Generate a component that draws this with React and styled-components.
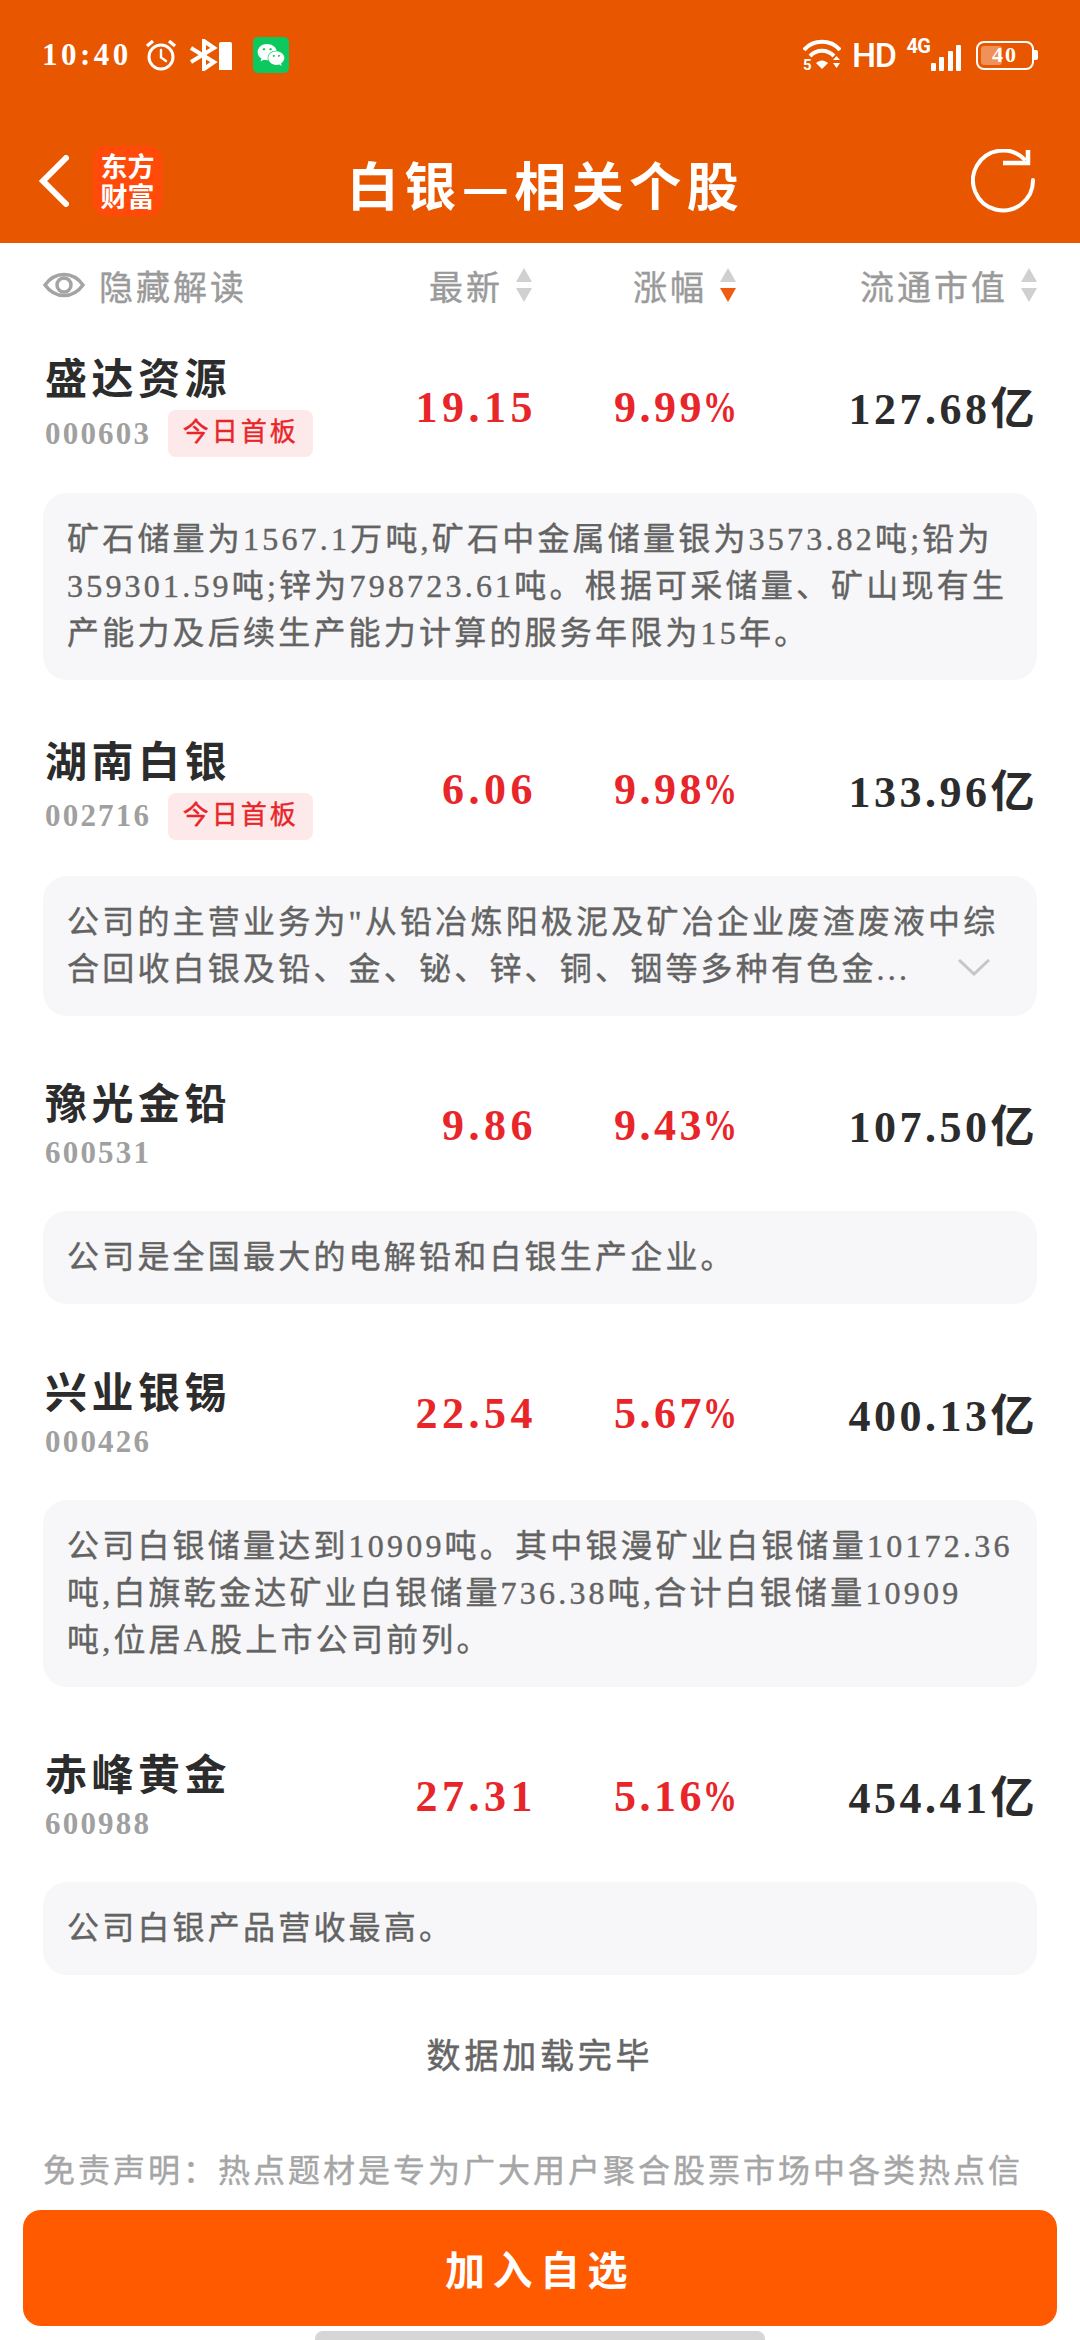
import React from "react";
import styled, { createGlobalStyle } from "styled-components";
import { FaWeixin } from "react-icons/fa";

const stocks = [
  {
    name: "盛达资源",
    code: "000603",
    tag: "今日首板",
    price: "19.15",
    pct: "9.99",
    cap: "127.68亿",
    lines: [
      "矿石储量为1567.1万吨,矿石中金属储量银为3573.82吨;铅为",
      "359301.59吨;锌为798723.61吨。根据可采储量、矿山现有生",
      "产能力及后续生产能力计算的服务年限为15年。",
    ],
  },
  {
    name: "湖南白银",
    code: "002716",
    tag: "今日首板",
    price: "6.06",
    pct: "9.98",
    cap: "133.96亿",
    collapsed: true,
    lines: [
      "公司的主营业务为\"从铅冶炼阳极泥及矿冶企业废渣废液中综",
      "合回收白银及铅、金、铋、锌、铜、铟等多种有色金...",
    ],
  },
  {
    name: "豫光金铅",
    code: "600531",
    price: "9.86",
    pct: "9.43",
    cap: "107.50亿",
    lines: ["公司是全国最大的电解铅和白银生产企业。"],
  },
  {
    name: "兴业银锡",
    code: "000426",
    price: "22.54",
    pct: "5.67",
    cap: "400.13亿",
    lines: [
      "公司白银储量达到10909吨。其中银漫矿业白银储量10172.36",
      "吨,白旗乾金达矿业白银储量736.38吨,合计白银储量10909",
      "吨,位居A股上市公司前列。",
    ],
  },
  {
    name: "赤峰黄金",
    code: "600988",
    price: "27.31",
    pct: "5.16",
    cap: "454.41亿",
    lines: ["公司白银产品营收最高。"],
  },
];

function AlarmIcon() {
  return (
    <svg width="32" height="32" viewBox="0 0 32 32" fill="none" stroke="#fff">
      <circle cx="16" cy="18" r="12" strokeWidth="3" />
      <path d="M16 11v7.5l5 3.5" strokeWidth="2.4" strokeLinecap="round" />
      <path d="M2 7l6-5M30 7l-6-5" strokeWidth="3.4" />
    </svg>
  );
}

function BluetoothIcon() {
  return (
    <svg width="30" height="32" viewBox="0 0 30 32" fill="none" stroke="#fff" strokeWidth="4">
      <path d="M2 9l23 14-10 7V2l10 7L2 23" />
    </svg>
  );
}

function WifiIcon() {
  return (
    <svg width="38" height="32" viewBox="0 0 38 32" fill="#fff">
      <path d="M1 11C10 0 28 0 37 11" fill="none" stroke="#fff" strokeWidth="4" />
      <path d="M7 17c7-7 17-7 24 0" fill="none" stroke="#fff" strokeWidth="4" />
      <path d="M13 24c4-3.500 8-3.500 12 0l-6 6z" />
      <path d="M30 21l3.500-4 3.500 4zM30 24h7l-3.500 5z" />
      <text x="0" y="31" fontSize="15" fontWeight="700" fontFamily="Roboto, sans-serif">5</text>
    </svg>
  );
}

function BackIcon() {
  return (
    <svg width="30" height="52" viewBox="0 0 30 52" fill="none" stroke="#fff" strokeWidth="6" strokeLinecap="round">
      <path d="M27 3L4 26l23 23" />
    </svg>
  );
}

function RefreshIcon() {
  return (
    <svg width="64" height="64" viewBox="0 0 64 64" fill="none" stroke="#fff" strokeWidth="4">
      <path d="M62 31A30 30 0 1 1 53 10" strokeLinecap="round" />
      <path d="M57 1v13H32" strokeWidth="4.500" />
    </svg>
  );
}

function EyeIcon() {
  return (
    <svg width="42" height="32" viewBox="0 0 42 32" fill="none" stroke="#a4a4a4" strokeWidth="3.500">
      <path d="M2 16C12 2 30 2 40 16 30 30 12 30 2 16z" />
      <circle cx="21" cy="16" r="7" />
    </svg>
  );
}

function ChevronIcon() {
  return (
    <svg width="32" height="17" viewBox="0 0 32 17" fill="none" stroke="#c6c6c6" strokeWidth="3">
      <path d="M1 1l15 14L31 1" />
    </svg>
  );
}

function SortHead({ label, active }) {
  return (
    <HeadCell>
      {label}
      <SortArrows>
        <ArrowUp />
        <ArrowDown $active={active} />
      </SortArrows>
    </HeadCell>
  );
}

function StockItem({ stock }) {
  return (
    <Item>
      <ItemHead>
        <NameCell>
          <Name>{stock.name}</Name>
          <Meta $tagged={!!stock.tag}>
            <Code>{stock.code}</Code>
            {stock.tag && <Tag>{stock.tag}</Tag>}
          </Meta>
        </NameCell>
        <Price>{stock.price}</Price>
        <Quote>
          {stock.pct}
          <PercentSign>%</PercentSign>
        </Quote>
        <MarketCap>{stock.cap}</MarketCap>
      </ItemHead>
      <Note>
        {stock.lines.map((line) => (
          <NoteLine key={line}>{line}</NoteLine>
        ))}
        {stock.collapsed && (
          <Expand>
            <ChevronIcon />
          </Expand>
        )}
      </Note>
    </Item>
  );
}

export default function App() {
  return (
    <Page>
      <GlobalStyle />
      <TopBar>
        <StatusBar>
          <StatusGroup>
            <Clock>10:40</Clock>
            <AlarmIcon />
            <BluetoothGroup>
              <BluetoothIcon />
              <MiniBattery />
            </BluetoothGroup>
            <WechatBadge>
              <FaWeixin size={28} color="#fff" />
            </WechatBadge>
          </StatusGroup>
          <StatusGroup>
            <WifiIcon />
            <HdLabel>HD</HdLabel>
            <SignalGroup>
              <NetLabel>4G</NetLabel>
              <Bars>
                <Bar $h={8} />
                <Bar $h={14} />
                <Bar $h={20} />
                <Bar $h={26} />
              </Bars>
            </SignalGroup>
            <Battery>
              <BatteryLevel />
              <BatteryText>40</BatteryText>
            </Battery>
          </StatusGroup>
        </StatusBar>
        <NavBar>
          <NavLeft>
            <BackIcon />
            <LogoBadge>
              东方
              <br />
              财富
            </LogoBadge>
          </NavLeft>
          <Title>白银—相关个股</Title>
          <NavRight>
            <RefreshIcon />
          </NavRight>
        </NavBar>
      </TopBar>

      <TableHead>
        <HideToggle>
          <EyeIcon />
          隐藏解读
        </HideToggle>
        <SortHead label="最新" />
        <SortHead label="涨幅" active />
        <SortHead label="流通市值" />
      </TableHead>

      {stocks.map((stock) => (
        <StockItem key={stock.code} stock={stock} />
      ))}

      <LoadedHint>数据加载完毕</LoadedHint>
      <Disclaimer>免责声明：热点题材是专为广大用户聚合股票市场中各类热点信</Disclaimer>

      <Dock>
        <AddButton>加入自选</AddButton>
        <HomeBar />
      </Dock>
    </Page>
  );
}

const GlobalStyle = createGlobalStyle`
  html, body {
    margin: 0;
    padding: 0;
    height: 100%;
    overflow: hidden;
    background: #fff;
  }
  * {
    box-sizing: border-box;
  }
`;

const Page = styled.div`
  width: 1080px;
  height: 2340px;
  overflow: hidden;
  font-family: "Liberation Serif", "Noto Sans CJK SC", serif;
`;

const TopBar = styled.header`
  height: 243px;
  background: #e85700;
  color: #fff;
  padding-top: 37px;
`;

const StatusBar = styled.div`
  height: 36px;
  padding: 0 46px 0 42px;
  display: flex;
  justify-content: space-between;
  align-items: center;
`;

const StatusGroup = styled.div`
  display: flex;
  align-items: center;
  gap: 13px;
`;

const Clock = styled.span`
  font-size: 31px;
  font-weight: 700;
  letter-spacing: 3.500px;
`;

const BluetoothGroup = styled.div`
  display: flex;
  align-items: center;
  margin-left: -1px;
`;

const MiniBattery = styled.div`
  width: 13px;
  height: 28px;
  margin-top: 2px;
  background: #fff;
  border-radius: 2px 2px 0 0;
`;

const WechatBadge = styled.div`
  width: 36px;
  height: 36px;
  margin-left: 8px;
  border-radius: 5px;
  background: #0bc95f;
  display: flex;
  align-items: center;
  justify-content: center;
`;

const HdLabel = styled.span`
  margin: 0 -3px 0 -2px;
  font-family: "Roboto", sans-serif;
  font-size: 34px;
  font-weight: 500;
  letter-spacing: -1.500px;
`;

const SignalGroup = styled.div`
  display: flex;
  align-items: flex-end;
  height: 32px;
  margin-left: 1px;
`;

const NetLabel = styled.span`
  font-family: "Roboto", sans-serif;
  font-size: 20px;
  font-weight: 700;
  line-height: 15px;
  letter-spacing: -0.500px;
  align-self: flex-start;
`;

const Bars = styled.div`
  display: flex;
  align-items: flex-end;
  gap: 3.500px;
`;

const Bar = styled.div.attrs((p) => ({ style: { height: p.$h } }))`
  width: 5px;
  background: #fff;
  border-radius: 1px;
`;

const Battery = styled.div`
  position: relative;
  width: 58px;
  height: 29px;
  margin-left: 2px;
  border: 2.500px solid #fff;
  border-radius: 8px;
  padding: 3px;
  display: flex;
  align-items: center;

  &::after {
    content: "";
    position: absolute;
    right: -6px;
    top: 7px;
    width: 4px;
    height: 10px;
    background: #fff;
    border-radius: 0 2px 2px 0;
  }
`;

const BatteryLevel = styled.div`
  width: 21px;
  height: 100%;
  background: rgba(255, 255, 255, 0.35);
  border-radius: 3px;
`;

const BatteryText = styled.span`
  position: absolute;
  left: 14px;
  top: 0;
  font-size: 22px;
  line-height: 24px;
  font-weight: 700;
  letter-spacing: 2px;
`;

const NavBar = styled.div`
  display: grid;
  grid-template-columns: 1fr auto 1fr;
  align-items: center;
  height: 70px;
  margin-top: 69px;
  padding: 0 45px 0 39px;
`;

const NavLeft = styled.div`
  display: flex;
  align-items: center;
  gap: 24px;
`;

const NavRight = styled.div`
  display: flex;
  justify-content: flex-end;
`;

const LogoBadge = styled.div`
  width: 69px;
  height: 70px;
  border-radius: 14px;
  background: #ff4a0a;
  font-family: "Noto Sans CJK SC", sans-serif;
  font-size: 27px;
  font-weight: 700;
  line-height: 30px;
  text-align: center;
  padding-top: 5px;
`;

const Title = styled.h1`
  margin: 7px 0 0 17px;
  font-family: "Noto Sans CJK SC", sans-serif;
  font-size: 52px;
  font-weight: 700;
  line-height: 70px;
  letter-spacing: 5.500px;
`;

const TableHead = styled.div`
  display: grid;
  grid-template-columns: 339px 147px 204px 301px;
  height: 78px;
  padding: 6px 0 0 43px;
  color: #9a9a9a;
  font-size: 34px;
  letter-spacing: 3px;
  -webkit-text-stroke: 0.4px #9a9a9a;
`;

const HideToggle = styled.div`
  display: flex;
  align-items: center;
  gap: 14px;
  height: 72px;
  white-space: nowrap;
`;

const HeadCell = styled.div`
  display: flex;
  justify-content: flex-end;
  align-items: center;
  gap: 13px;
  height: 72px;
`;

const SortArrows = styled.div`
  display: flex;
  flex-direction: column;
  gap: 6px;
  margin-right: -3px;
`;

const ArrowUp = styled.i`
  display: block;
  width: 0;
  height: 0;
  border-left: 8px solid transparent;
  border-right: 8px solid transparent;
  border-bottom: 14px solid #d0d0d0;
`;

const ArrowDown = styled.i`
  display: block;
  width: 0;
  height: 0;
  border-left: 8px solid transparent;
  border-right: 8px solid transparent;
  border-top: 14px solid ${(p) => (p.$active ? "#f05a12" : "#d0d0d0")};
`;

const Item = styled.section`
  & + & {
    margin-top: 23.500px;
  }
`;

const ItemHead = styled.div`
  display: grid;
  grid-template-columns: 342px 150px 200px 301px;
  align-items: center;
  height: 172px;
  padding-left: 45px;
`;

const NameCell = styled.div`
  display: flex;
  flex-direction: column;
`;

const Name = styled.div`
  font-size: 42px;
  font-weight: 700;
  line-height: 46px;
  letter-spacing: 4.500px;
  color: #2c2c2c;
`;

const Meta = styled.div`
  display: flex;
  align-items: center;
  gap: 17px;
  height: ${(p) => (p.$tagged ? "47px" : "30px")};
  margin-top: ${(p) => (p.$tagged ? "7px" : "10px")};
`;

const Code = styled.span`
  font-size: 31px;
  font-weight: 700;
  letter-spacing: 2.200px;
  color: #a0a0a0;
`;

const Tag = styled.span`
  height: 47px;
  width: 145px;
  border-radius: 8px;
  background: #fde9e9;
  color: #e8262a;
  font-size: 26px;
  line-height: 45px;
  letter-spacing: 3px;
  text-align: center;
  -webkit-text-stroke: 0.4px #e8262a;
`;

const Quote = styled.div`
  text-align: right;
  font-size: 44px;
  font-weight: 700;
  letter-spacing: 3.500px;
  color: #e8262a;
`;

const Price = styled(Quote)`
  letter-spacing: 4.500px;
`;

const PercentSign = styled.span`
  display: inline-block;
  margin-left: -12px;
  letter-spacing: 0;
  transform: scaleX(0.78);
  transform-origin: right center;
`;

const MarketCap = styled(Quote)`
  color: #2c2c2c;
  margin-bottom: 4px;
`;

const Note = styled.div`
  position: relative;
  margin: 0 43px;
  padding: 23px 0 23px 24px;
  border-radius: 24px;
  background: #f7f7f9;
  color: #636363;
  font-size: 32px;
  line-height: 47px;
  letter-spacing: 3.200px;
  -webkit-text-stroke: 0.4px #636363;
`;

const NoteLine = styled.div`
  white-space: nowrap;
`;

const Expand = styled.span`
  position: absolute;
  right: 47px;
  bottom: 40px;
  display: flex;
`;

const LoadedHint = styled.div`
  margin-top: 58px;
  text-align: center;
  font-size: 34px;
  line-height: 47px;
  letter-spacing: 3.800px;
  color: #666;
  -webkit-text-stroke: 0.5px #666;
`;

const Disclaimer = styled.p`
  margin: 68px 0 0;
  padding-left: 43px;
  white-space: nowrap;
  font-size: 32px;
  line-height: 47px;
  letter-spacing: 3px;
  color: #a6a6a6;
  -webkit-text-stroke: 0.4px #a6a6a6;
`;

const Dock = styled.footer`
  position: fixed;
  left: 0;
  right: 0;
  bottom: 0;
  display: flex;
  flex-direction: column;
  align-items: center;
`;

const AddButton = styled.button`
  width: 1034px;
  height: 116px;
  border: 0;
  border-radius: 18px;
  background: #ff5a00;
  color: #fff;
  font-family: "Noto Sans CJK SC", sans-serif;
  font-size: 40px;
  font-weight: 700;
  letter-spacing: 7.500px;
`;

const HomeBar = styled.div`
  width: 450px;
  height: 9px;
  margin-top: 5px;
  border-radius: 8px 8px 0 0;
  background: #d6d6d6;
`;
